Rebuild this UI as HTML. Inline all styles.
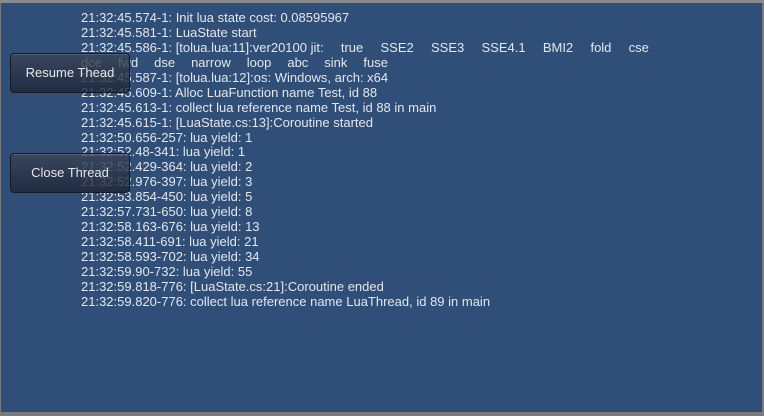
<!DOCTYPE html>
<html><head><style>
html,body{margin:0;padding:0}
body{width:764px;height:416px;background:#7a7a7a;position:relative;overflow:hidden;font-family:"Liberation Sans",sans-serif}
#top{position:absolute;left:0;top:0;width:764px;height:3px;background:#8a8a8a}
#panel{position:absolute;left:1px;top:3px;width:761px;height:409px;background:#304f78}
#log{position:absolute;left:81px;top:11px;width:568px;color:#e4e6ea;font-size:13px}
#log div{height:14.95px;line-height:14.95px;white-space:nowrap}
.btn{position:absolute;left:10px;width:118px;height:38px;border:1px solid #151a24;border-radius:4px;background:linear-gradient(#3a4458cc,#1c2333cc);color:#e8e8e8;font-size:13px;text-align:center;line-height:38px;box-shadow:inset 0 1px 0 rgba(255,255,255,0.15)}
</style></head><body>
<div id="top"></div>
<div id="panel"></div>
<div id="log">
<div>21:32:45.574-1: Init lua state cost: 0.08595967</div>
<div>21:32:45.581-1: LuaState start</div>
<div style="display:flex;justify-content:space-between"><span>21:32:45.586-1: [tolua.lua:11]:ver20100 jit:</span><span>true</span><span>SSE2</span><span>SSE3</span><span>SSE4.1</span><span>BMI2</span><span>fold</span><span>cse</span></div>
<div style="display:flex;justify-content:space-between;width:307px"><span>dce</span><span>fwd</span><span>dse</span><span>narrow</span><span>loop</span><span>abc</span><span>sink</span><span>fuse</span></div>
<div>21:32:45.587-1: [tolua.lua:12]:os: Windows, arch: x64</div>
<div>21:32:45.609-1: Alloc LuaFunction name Test, id 88</div>
<div>21:32:45.613-1: collect lua reference name Test, id 88 in main</div>
<div>21:32:45.615-1: [LuaState.cs:13]:Coroutine started</div>
<div>21:32:50.656-257: lua yield: 1</div>
<div>21:32:52.48-341: lua yield: 1</div>
<div>21:32:52.429-364: lua yield: 2</div>
<div>21:32:52.976-397: lua yield: 3</div>
<div>21:32:53.854-450: lua yield: 5</div>
<div>21:32:57.731-650: lua yield: 8</div>
<div>21:32:58.163-676: lua yield: 13</div>
<div>21:32:58.411-691: lua yield: 21</div>
<div>21:32:58.593-702: lua yield: 34</div>
<div>21:32:59.90-732: lua yield: 55</div>
<div>21:32:59.818-776: [LuaState.cs:21]:Coroutine ended</div>
<div>21:32:59.820-776: collect lua reference name LuaThread, id 89 in main</div>
</div>
<div class="btn" style="top:53px">Resume Thead</div>
<div class="btn" style="top:153px">Close Thread</div>
</body></html>
